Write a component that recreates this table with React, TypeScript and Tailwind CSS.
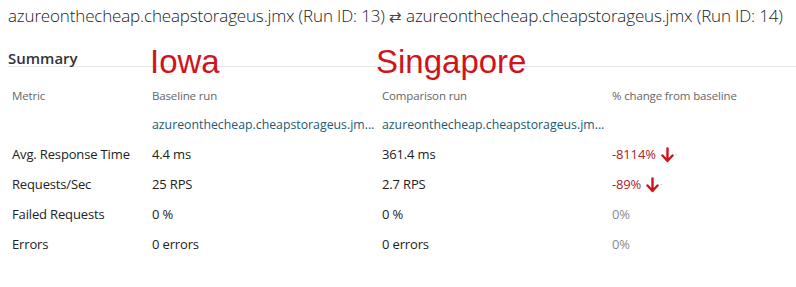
type Row = {
  metric: string;
  baseline: string;
  comparison: string;
  change: string;
  worse: boolean;
};

const rows: Row[] = [
  { metric: 'Avg. Response Time', baseline: '4.4 ms', comparison: '361.4 ms', change: '-8114%', worse: true },
  { metric: 'Requests/Sec', baseline: '25 RPS', comparison: '2.7 RPS', change: '-89%', worse: true },
  { metric: 'Failed Requests', baseline: '0 %', comparison: '0 %', change: '0%', worse: false },
  { metric: 'Errors', baseline: '0 errors', comparison: '0 errors', change: '0%', worse: false },
];

const runName = 'azureonthecheap.cheapstorageus.jmx';

function DownArrow() {
  return (
    <svg width="13" height="16" viewBox="0 0 13 16" fill="none" className="ml-[5px]">
      <path d="M6.5 1.5v12M1.5 8.5l5 5.5 5-5.5" stroke="#c8161d" strokeWidth="2.4" strokeLinecap="round" strokeLinejoin="round" />
    </svg>
  );
}

export default function App() {
  return (
    <div className="w-[796px] h-[287px] bg-white text-[#222] font-['Open_Sans',sans-serif] overflow-hidden">
      {/* Title */}
      <div className="px-2 pt-[3px] h-[40px] text-[17px] font-light tracking-[-0.16px] whitespace-nowrap">
        {runName} (Run ID: 13) <span className="text-[15px] font-extralight text-[#444]">⇄</span> {runName} (Run ID: 14)
      </div>

      {/* Summary header */}
      <div className="relative ml-2 border-b border-[#e6e6e6] h-[27px] pt-[6px]">
        <span className="text-[15px] font-semibold text-[#333] leading-[20px]">Summary</span>
        <span className="absolute left-[142px] top-[5px] text-[33px] leading-none text-[#d0141c] font-['Liberation_Sans',sans-serif]">
          Iowa
        </span>
        <span className="absolute left-[368px] top-[5px] text-[33px] leading-none text-[#d0141c] font-['Liberation_Sans',sans-serif]">
          Singapore
        </span>
      </div>

      {/* Table */}
      <div className="pl-3 pt-[14px] text-[13px] tracking-[-0.15px]">
        <div className="grid grid-cols-[140px_230px_230px_1fr] h-[29.5px] items-center text-[11.5px] text-[#666]">
          <div>Metric</div>
          <div>Baseline run</div>
          <div>Comparison run</div>
          <div>% change from baseline</div>
        </div>
        <div className="grid grid-cols-[140px_230px_230px_1fr] h-[29.5px] items-center text-[12.3px] tracking-normal text-[#1d5a73]">
          <div />
          <div className="whitespace-nowrap">{runName.slice(0, 33)}...</div>
          <div className="whitespace-nowrap">{runName.slice(0, 33)}...</div>
          <div />
        </div>
        {rows.map((r) => (
          <div key={r.metric} className="grid grid-cols-[140px_230px_230px_1fr] h-[29.8px] items-center">
            <div>{r.metric}</div>
            <div>{r.baseline}</div>
            <div>{r.comparison}</div>
            <div className={`flex items-center ${r.worse ? 'text-[#a8232a]' : 'text-[#8a8a8a]'}`}>
              {r.change}
              {r.worse && (
                <>
                  <DownArrow />
                  <span className="ml-[1px] text-[9px] text-[#aaa]">·</span>
                </>
              )}
            </div>
          </div>
        ))}
      </div>
    </div>
  );
}
